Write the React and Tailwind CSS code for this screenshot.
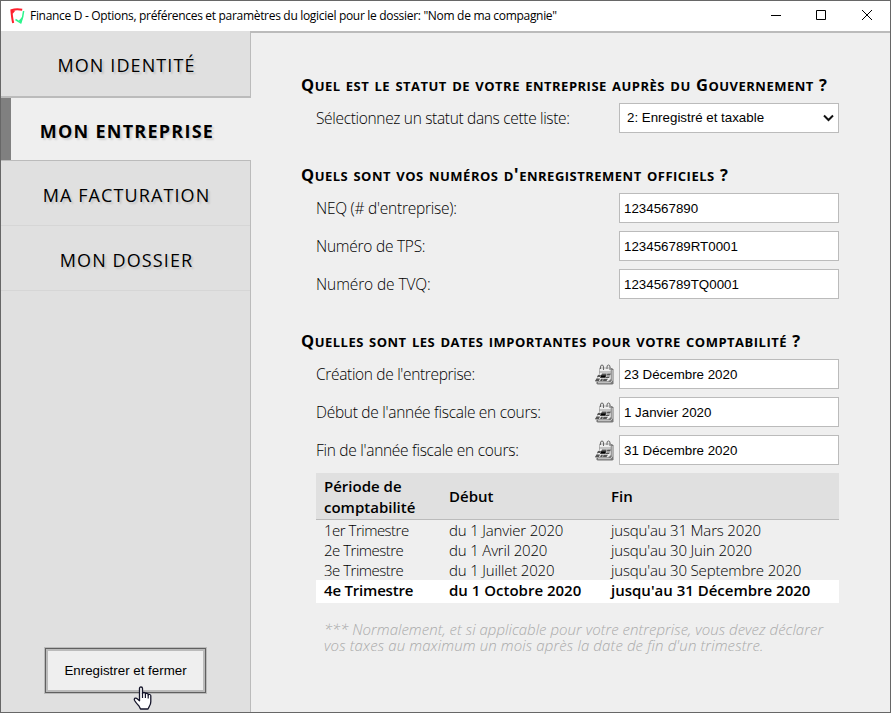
import React from "react";

function Logo() {
  return (
    <svg width="16" height="17" viewBox="0 0 16 17" fill="none">
      <path d="M13.200 1.800C9 1.100 5 1.400 2.400 2.300C2.700 6 3.200 11 4.200 15" stroke="#ff1f2d" strokeWidth="2" />
      <path d="M2.400 2.300L6.500 2.500L3.500 6Z" fill="#ff1f2d" />
      <path d="M14.600 3C14.200 8 13.300 11 11.800 14.800L6.500 11.500" stroke="#2bf58c" strokeWidth="1.500" />
      <path d="M14 8L12.500 14.500L9.500 13Z" fill="#2bf58c" />
    </svg>
  );
}

function CalendarIcon() {
  return (
    <svg width="20" height="21" viewBox="0 0 20 21" className="shrink-0">
      <path d="M16.500 4H18L19.500 5.500V19.500L18.500 20.500H3.500L2.500 19.500V16Z" fill="#777" />
      <path d="M5.500 4H17V15L14 17.500H1.500L5.500 10Z" fill="#eee" stroke="#999" strokeWidth=".7" />
      <path d="M4 18.700H16.500L18.200 16.500V6" stroke="#ddd" strokeWidth=".9" fill="none" />
      <path d="M6.500 5V3Q6.500 1 8 1T9.500 3V6M13 5V3Q13 1 14.500 1T16 3V6" stroke="#666" strokeWidth="1" fill="none" />
      <path d="M5 8H17" stroke="#999" />
      <path d="M8 9.500H17L16 11.500H7Z" fill="#555" />
      <path d="M7 11.200H12.500L11.500 13.800H6Z" fill="#000" />
      <path d="M4 11H7L6 13H3ZM12.500 12.500H16L15 14H11.500ZM2.500 14.500H6L5 17H1ZM7 14.800H14L12.500 17H6Z" fill="#555" />
      <path d="M9.500 14L8.500 17M13 9L12 13" stroke="#ddd" strokeWidth=".6" />
    </svg>
  );
}

function Hand() {
  return (
    <svg width="20" height="24" viewBox="0 0 20 24" className="absolute left-[132px] top-[685px]">
      <path
        d="M6.500 2.500Q6.500 1 8 1T9.500 2.500V7.500Q9.500 6.500 11 6.500T12.500 8Q12.700 7 14 7.300T15.200 9Q15.500 8 16.800 8.500T17.800 10V15.500Q17.800 18 16.500 20L15 23H7.500L6 20Q3 17 1.600 14.500Q.800 12.800 2.200 12.200Q3.500 12 4.700 13.200L6.500 14.700Z"
        fill="#fff" stroke="#15152a" strokeWidth="1.300" strokeLinejoin="round"
      />
      <path d="M9.500 7V12M12.400 8V12M15.200 9V12.500" stroke="#15152a" strokeWidth="1.200" />
    </svg>
  );
}

function Cap({ children }) {
  return <span className="text-[16.5px]">{children}</span>;
}

function Heading({ children, className = "" }) {
  return (
    <h2 className={"mb-[5px] h-[26px] whitespace-nowrap font-['Open_Sans','Noto_Sans',sans-serif] text-[18.4px] font-bold leading-[24px] tracking-[0.49px] [font-variant:small-caps] " + className}>
      {children}
    </h2>
  );
}

function Row({ label, value, track, icon, select }) {
  return (
    <div className="flex h-[30px] items-center pl-[15px]">
      <label className={"flex-1 whitespace-nowrap pt-[2px] font-['Open_Sans','Noto_Sans',sans-serif] text-[15.5px] font-light text-black " + track}>{label}</label>
      {icon && <span className="mr-[5px]"><CalendarIcon /></span>}
      {select ? (
        <div className="flex h-[30px] w-[220px] items-center justify-between border border-[#bbb] bg-white pl-[7px] pr-[4px] text-[13.33px]">
          <span>{value}</span>
          <svg width="11" height="8" viewBox="0 0 11 8" fill="none">
            <path d="M1 1.500L5.500 6L10 1.500" stroke="#111" strokeWidth="2" />
          </svg>
        </div>
      ) : (
        <input readOnly value={value} className="h-[30px] w-[220px] border border-[#bbb] bg-white px-1 text-[13.33px] outline-none" />
      )}
    </div>
  );
}

const periods = [
  ["1er Trimestre", "du 1 Janvier 2020", "jusqu'au 31 Mars 2020"],
  ["2e Trimestre", "du 1 Avril 2020", "jusqu'au 30 Juin 2020"],
  ["3e Trimestre", "du 1 Juillet 2020", "jusqu'au 30 Septembre 2020"],
];

const tabText = "whitespace-nowrap font-['Open_Sans','Noto_Sans',sans-serif] text-lg [text-shadow:2px_2px_2px_rgba(0,0,0,0.13)] ";

export default function App() {
  return (
    <div className="relative flex h-[713px] w-[891px] flex-col overflow-hidden border border-[#676767] bg-[#efefef] font-['Liberation_Sans',Arial,sans-serif] text-black">
      <header className="flex h-[30px] shrink-0 items-center bg-white pl-2">
        <Logo />
        <span className="ml-[5px] flex-1 whitespace-nowrap font-['Open_Sans','Noto_Sans',sans-serif] text-xs tracking-[-0.31px]">
          Finance D - Options, préférences et paramètres du logiciel pour le dossier: "Nom de ma compagnie"
        </span>
        <svg width="120" height="30" viewBox="0 0 120 30" fill="none" stroke="#000" className="shrink-0">
          <path d="M1 14.500H11M46.500 9.500H55.500V18.500H46.500ZM92 9L102 19M102 9L92 19" />
        </svg>
      </header>
      <div className="flex flex-1">
        <nav className="flex w-[250px] shrink-0 flex-col bg-[#e0e0e0]">
          <div className="flex h-[67px] items-center justify-center border-b-2 border-r border-[#bbb] pl-[2px] pt-[3px]">
            <span className={tabText + "tracking-[1.1px]"}>MON IDENTITÉ</span>
          </div>
          <div className="flex h-[62px] items-center justify-center border-l-[10px] border-[#808080] bg-[#efefef] pr-[8px] pt-[4px]">
            <span className={tabText + "font-bold tracking-[1.25px]"}>MON ENTREPRISE</span>
          </div>
          <div className="flex flex-1 flex-col border-r border-t border-[#bbb]">
            <div className="flex h-[65px] items-center justify-center border-b border-[#d6d6d6] pl-[2px] pt-[3px]">
              <span className={tabText + "tracking-[1.1px]"}>MA FACTURATION</span>
            </div>
            <div className="flex h-[65px] items-center justify-center border-b border-[#d6d6d6] pl-[2px] pt-[3px]">
              <span className={tabText + "tracking-[1.1px]"}>MON DOSSIER</span>
            </div>
            <button className="mb-[18px] ml-[43px] mt-auto h-[47px] w-[163px] border border-[#bbb] bg-[#bbb]">
              <span className="flex h-[45px] w-[161px] items-center justify-center border border-[#606060] bg-[#bbb] p-[2px]">
                <span className="flex h-full w-full items-center justify-center bg-[#efefef] text-[13.33px]">Enregistrer et fermer</span>
              </span>
            </button>
          </div>
        </nav>
        <main className="min-w-0 flex-1 border-t-2 border-[#bbb] pl-[50px] pr-[51px] pt-[39px]">
          <Heading><Cap>Q</Cap>uel est le statut de votre entreprise auprès du <Cap>G</Cap>ouvernement <Cap>?</Cap></Heading>
          <Row label="Sélectionnez un statut dans cette liste:" value="2: Enregistré et taxable" track="tracking-[-0.33px]" select />
          <Heading className="mt-[29px]"><Cap>Q</Cap>uels sont vos numéros d'enregistrement officiels <Cap>?</Cap></Heading>
          <div className="flex flex-col gap-2">
            <Row label="NEQ (# d'entreprise):" value="1234567890" track="tracking-[-0.25px]" />
            <Row label="Numéro de TPS:" value="123456789RT0001" track="tracking-[-0.25px]" />
            <Row label="Numéro de TVQ:" value="123456789TQ0001" track="tracking-[-0.1px]" />
          </div>
          <Heading className="mt-[29px]"><Cap>Q</Cap>uelles sont les dates importantes pour votre comptabilité <Cap>?</Cap></Heading>
          <div className="flex flex-col gap-2">
            <Row label="Création de l'entreprise:" value="23 Décembre 2020" track="tracking-[-0.33px]" icon />
            <Row label="Début de l'année fiscale en cours:" value="1 Janvier 2020" track="tracking-[-0.28px]" icon />
            <Row label="Fin de l'année fiscale en cours:" value="31 Décembre 2020" track="tracking-[-0.28px]" icon />
          </div>
          <div className="ml-[15px] mt-2 whitespace-nowrap font-['Open_Sans','Noto_Sans',sans-serif] text-[15px] font-light">
            <div className="grid h-[47px] grid-cols-[125px_162px_1fr] items-center border-b border-[#bbb] bg-[#e0e0e0] pl-2 font-semibold leading-[21px]">
              <div className="pt-[2px]">Période de<br />comptabilité</div>
              <div>Début</div>
              <div>Fin</div>
            </div>
            {periods.map((row) => (
              <div key={row[0]} className="grid h-5 grid-cols-[125px_162px_1fr] pl-2 leading-5 tracking-[-0.17px]">
                <div className="tracking-[-0.5px]">{row[0]}</div>
                <div>{row[1]}</div>
                <div>{row[2]}</div>
              </div>
            ))}
            <div className="grid h-[23px] grid-cols-[125px_162px_1fr] bg-white pl-2 font-semibold leading-[20px]">
              <div className="tracking-[-0.2px]">4e Trimestre</div>
              <div>du 1 Octobre 2020</div>
              <div>jusqu'au 31 Décembre 2020</div>
            </div>
            <p className="ml-2 mt-[18px] italic leading-4 text-[#aaa]">
              <span className="tracking-[0.03px]">*** Normalement, et si applicable pour votre entreprise, vous devez déclarer</span>
              <br />
              <span className="tracking-[0.12px]">vos taxes au maximum un mois après la date de fin d'un trimestre.</span>
            </p>
          </div>
        </main>
      </div>
      <Hand />
    </div>
  );
}
